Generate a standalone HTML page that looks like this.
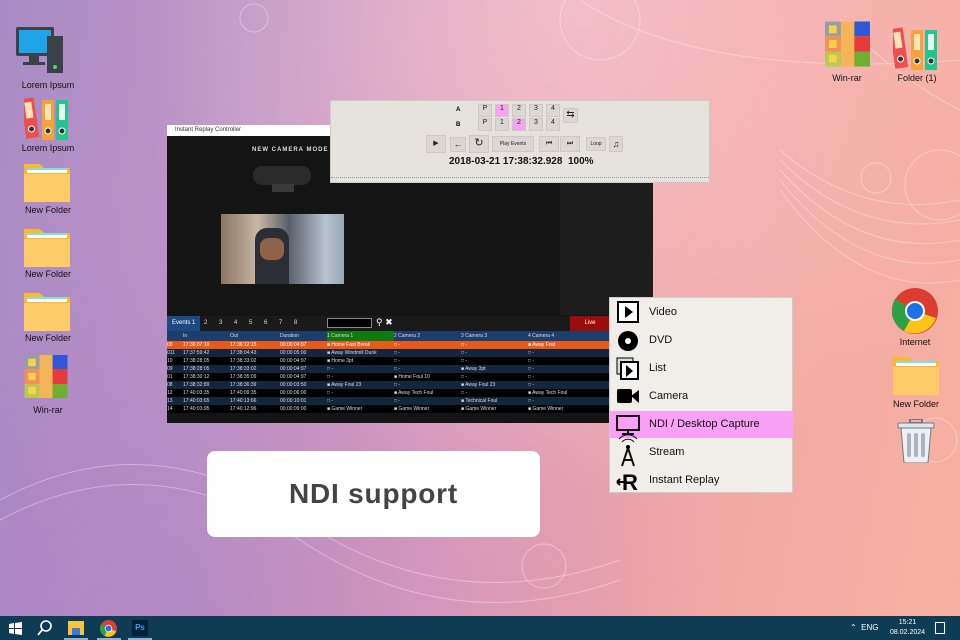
<!DOCTYPE html><html><head><meta charset="utf-8"><style>
*{margin:0;padding:0;box-sizing:border-box}
body{width:960px;height:640px;overflow:hidden;position:relative;font-family:"Liberation Sans",sans-serif;
background:linear-gradient(100deg,#a98ac4 0%,#c096c8 25%,#e3a0bb 50%,#f1a7a6 72%,#f7b1a0 100%)}
.bgtop{position:absolute;left:0;top:0;width:960px;height:640px;background:radial-gradient(ellipse at 60% 0%,rgba(255,215,215,.55),rgba(255,255,255,0) 55%),radial-gradient(ellipse at 20% 100%,rgba(150,110,190,.35),rgba(0,0,0,0) 50%)}
.a{position:absolute}
.lbl{position:absolute;font-size:9px;color:#111;text-align:center;width:80px}
.win{left:167px;top:125px;width:486px;height:298px;background:#141414}
.tb{left:167px;top:125px;width:163px;height:11px;background:#fff;font-size:6px;color:#333;padding:2px 0 0 8px}
.panel{left:330px;top:100px;width:380px;height:83px;background:#e6e2de;border:1px solid #cfcac5}
.btn{position:absolute;background:#dcd7d2;border:1px solid #cdc8c3;font-size:7px;text-align:center;color:#222}
.pk{background:#f7a3f2}
table{border-collapse:collapse;font-size:5px;color:#ddd}
.menu{left:609px;top:297px;width:184px;height:196px;background:#f1ede9;border:1px solid #ccc}
.mi{position:absolute;left:0;width:183px;height:27px;font-size:11px;color:#111;padding:7px 0 0 39px}
.ndi{left:207px;top:451px;width:333px;height:86px;background:#fff;border-radius:8px;font-size:28px;font-weight:bold;color:#444;text-align:center;line-height:86px;letter-spacing:.8px}
.task{left:0;top:616px;width:960px;height:24px;background:#0e3c55}
</style></head><body>
<div class="bgtop"></div>
<svg class="a" style="left:0;top:0" width="960" height="616">
<g fill="none" stroke="rgba(255,255,255,.35)" stroke-width="1">
<path d="M580 0 Q700 80 960 60"/><path d="M840 20 Q900 80 960 110"/><path d="M0 500 Q150 420 300 520 T620 560"/><path d="M0 520 Q150 440 300 540 T620 580"/><path d="M780 150 Q860 220 960 200"/>
<path d="M780 160 Q860 240 960 220"/><path d="M780 170 Q860 260 960 240"/><path d="M780 180 Q860 280 960 260"/><path d="M780 190 Q860 300 960 280"/>
<circle cx="876" cy="178" r="15"/><circle cx="940" cy="185" r="35"/><circle cx="544" cy="566" r="22"/><circle cx="254" cy="18" r="14"/><circle cx="935" cy="440" r="22"/><circle cx="600" cy="20" r="40"/>
</g></svg>

<svg width="0" height="0" style="position:absolute"><defs>
<symbol id="fold" viewBox="0 0 46 42"><path d="M0 4h16l4 4h26v34H0z" fill="#fbb829"/><rect x="3" y="8" width="40" height="5" fill="#fff"/><rect x="3" y="8" width="40" height="2" fill="#7fe0e6"/><path d="M0 14h46v28H0z" fill="#fdcb68"/></symbol>
<symbol id="bind" viewBox="0 0 46 44"><g transform="rotate(-8 8 40)"><rect x="2" y="2" width="13" height="40" fill="#ef4e4e"/><rect x="5" y="6" width="7" height="16" fill="#fde3b8"/><circle cx="8.5" cy="33" r="3" fill="#333" stroke="#fff"/></g><rect x="18" y="4" width="12" height="40" fill="#f7a236"/><rect x="21" y="8" width="6" height="16" fill="#fde3b8"/><circle cx="24" cy="35" r="3" fill="#333" stroke="#fff"/><rect x="32" y="4" width="12" height="40" fill="#22c58b"/><rect x="35" y="8" width="6" height="16" fill="#e6f8ee"/><circle cx="38" cy="35" r="3" fill="#333" stroke="#fff"/></symbol>
<symbol id="rar" viewBox="0 0 46 46"><rect width="46" height="15" fill="#2f57d6"/><rect y="15" width="46" height="16" fill="#e43b3b"/><rect y="31" width="46" height="15" fill="#6daf31"/><rect width="16" height="46" fill="rgba(255,230,120,.5)"/><rect x="16" width="14" height="46" fill="#f5b45a"/><rect x="4" y="4" width="8" height="8" fill="#f7d24a"/><rect x="4" y="19" width="8" height="8" fill="#f7d24a"/><rect x="4" y="34" width="8" height="8" fill="#f7d24a"/></symbol>
</defs></svg>
<svg class="a" style="left:16px;top:27px" width="47" height="47"><rect x="0" y="0" width="38" height="29" rx="2" fill="#3a4148"/><rect x="3" y="3" width="32" height="23" fill="#1ea5e8"/><rect x="13" y="29" width="10" height="6" fill="#3a4148"/><rect x="7" y="35" width="22" height="3" fill="#3a4148"/><rect x="31" y="9" width="16" height="37" fill="#3a4148"/><circle cx="39" cy="40" r="2" fill="#4cd964"/></svg>
<div class="lbl" style="left:8px;top:80px">Lorem Ipsum</div>
<svg class="a" style="left:24px;top:96px" width="46" height="44"><use href="#bind"/></svg>
<div class="lbl" style="left:8px;top:143px">Lorem Ipsum</div>
<svg class="a" style="left:24px;top:160px" width="46" height="42"><use href="#fold"/></svg>
<div class="lbl" style="left:8px;top:205px">New Folder</div>
<svg class="a" style="left:24px;top:225px" width="46" height="42"><use href="#fold"/></svg>
<div class="lbl" style="left:8px;top:269px">New Folder</div>
<svg class="a" style="left:24px;top:289px" width="46" height="42"><use href="#fold"/></svg>
<div class="lbl" style="left:8px;top:333px">New Folder</div>
<svg class="a" style="left:24px;top:355px" width="44" height="43"><use href="#rar"/></svg>
<div class="lbl" style="left:8px;top:405px">Win-rar</div>
<svg class="a" style="left:825px;top:21px" width="45" height="46"><use href="#rar"/></svg>
<div class="lbl" style="left:807px;top:73px">Win-rar</div>
<svg class="a" style="left:893px;top:26px" width="46" height="44"><use href="#bind"/></svg>
<div class="lbl" style="left:877px;top:73px">Folder (1)</div>
<svg class="a" style="left:892px;top:288px" width="46" height="46" viewBox="0 0 46 46"><circle cx="23" cy="23" r="23" fill="#db3e31"/><path d="M23 23L3 11A23 23 0 0 0 12 43z" fill="#2ea043"/><path d="M23 23L12 43A23 23 0 0 0 44 30z" fill="#fcc419"/><circle cx="23" cy="23" r="10" fill="#fff"/><circle cx="23" cy="23" r="8" fill="#1a73e8"/></svg>
<div class="lbl" style="left:875px;top:337px">Internet</div>
<svg class="a" style="left:893px;top:353px" width="46" height="42"><use href="#fold"/></svg>
<div class="lbl" style="left:876px;top:399px">New Folder</div>
<svg class="a" style="left:897px;top:419px" width="38" height="44" viewBox="0 0 38 44"><rect x="13" y="0" width="12" height="4" fill="none" stroke="#6e7a86" stroke-width="2"/><rect x="1" y="4" width="36" height="5" rx="1" fill="#dfe4ea" stroke="#6e7a86"/><path d="M4 9h30l-3 35H7z" fill="#eef1f4" stroke="#6e7a86"/><rect x="10" y="14" width="4" height="24" rx="2" fill="#aab4bf"/><rect x="17" y="14" width="4" height="24" rx="2" fill="#aab4bf"/><rect x="24" y="14" width="4" height="24" rx="2" fill="#aab4bf"/></svg>

<div class="a win"></div>
<div class="a tb">Instant Replay Controller</div>
<div class="a" style="left:252px;top:147px;font-size:6px;color:#ddd;font-weight:bold;letter-spacing:1px">NEW CAMERA MODE</div>
<div class="a" style="left:253px;top:166px;width:58px;height:19px;border-radius:9px;background:#2a2a2a"></div>
<div class="a" style="left:272px;top:184px;width:22px;height:8px;background:#3a3a3a"></div>
<div class="a" style="left:221px;top:214px;width:123px;height:70px;background:linear-gradient(90deg,#8a7560,#c9b7a4 30%,#5a5e6a 55%,#b7c3cf 85%,#9aa6b4)"></div>
<div class="a" style="left:255px;top:228px;width:34px;height:56px;background:#2b2e35;border-radius:12px 12px 0 0"></div>
<div class="a" style="left:260px;top:238px;width:24px;height:22px;background:#8d6248;border-radius:8px"></div>
<div class="a" style="left:560px;top:183px;width:93px;height:132px;background:#1d1d1d"></div>
<div class="a" style="left:167px;top:316px;width:486px;height:15px;background:#1a1a1a"></div>
<div class="a" style="left:167px;top:316px;width:33px;height:15px;background:#1d4a85;font-size:6px;color:#fff;padding:4px 0 0 5px">Events 1</div>
<div class="a" style="left:204px;top:320px;font-size:6px;color:#ddd;word-spacing:10px">2 3 4 5 6 7 8</div>
<div class="a" style="left:327px;top:318px;width:45px;height:10px;background:#000;border:1px solid #888"></div>
<div class="a" style="left:376px;top:317px;font-size:9px;color:#fff">⚲ ✖</div>
<div class="a" style="left:570px;top:316px;width:40px;height:15px;background:#9b0c0c;font-size:6px;color:#fff;text-align:center;padding-top:4px">Live</div>
<table class="a" style="left:167px;top:331px;width:443px">
<tr style="background:#1b3e6e;height:10px"><td style="width:16px"></td><td style="width:47px">In</td><td style="width:50px">Out</td><td style="width:47px">Duration</td><td style="width:67px;background:#0e7a0e">1 Camera 1</td><td style="width:67px">2 Camera 2</td><td style="width:67px">3 Camera 3</td><td>4 Camera 4</td></tr>
<tr style="background:#e8591a;height:8px;color:#fff"><td>00</td><td>17:36:07:10</td><td>17:36:12:15</td><td>00:00:04:97</td><td>■ Home Fast Break</td><td>□ -</td><td>□ -</td><td>■ Away Foul</td></tr>
<tr style="background:#132640;height:8px"><td>011</td><td>17:37:59:42</td><td>17:38:04:43</td><td>00:00:05:00</td><td>■ Away Windmill Dunk</td><td>□ -</td><td>□ -</td><td>□ -</td></tr>
<tr style="background:#000;height:8px"><td>10</td><td>17:38:28:05</td><td>17:38:33:02</td><td>00:00:04:97</td><td>■ Home 3pt</td><td>□ -</td><td>□ -</td><td>□ -</td></tr>
<tr style="background:#132640;height:8px"><td>09</td><td>17:38:28:05</td><td>17:38:33:02</td><td>00:00:04:97</td><td>□ -</td><td>□ -</td><td>■ Away 3pt</td><td>□ -</td></tr>
<tr style="background:#000;height:8px"><td>01</td><td>17:38:30:12</td><td>17:38:35:09</td><td>00:00:04:97</td><td>□ -</td><td>■ Home Foul 10</td><td>□ -</td><td>□ -</td></tr>
<tr style="background:#132640;height:8px"><td>08</td><td>17:38:32:89</td><td>17:38:36:39</td><td>00:00:03:50</td><td>■ Away Foul 23</td><td>□ -</td><td>■ Away Foul 23</td><td>□ -</td></tr>
<tr style="background:#000;height:8px"><td>12</td><td>17:40:03:35</td><td>17:40:09:35</td><td>00:00:06:00</td><td>□ -</td><td>■ Away Tech Foul</td><td>□ -</td><td>■ Away Tech Foul</td></tr>
<tr style="background:#132640;height:8px"><td>13</td><td>17:40:03:65</td><td>17:40:13:66</td><td>00:00:10:01</td><td>□ -</td><td>□ -</td><td>■ Technical Foul</td><td>□ -</td></tr>
<tr style="background:#000;height:8px"><td>14</td><td>17:40:03:95</td><td>17:40:12:96</td><td>00:00:09:00</td><td>■ Game Winner</td><td>■ Game Winner</td><td>■ Game Winner</td><td>■ Game Winner</td></tr>
</table>

<div class="a panel">
<div class="a" style="left:125px;top:6px;font-size:6px;font-weight:bold">A</div>
<div class="a" style="left:125px;top:21px;font-size:6px;font-weight:bold">B</div>
<div class="btn" style="left:147px;top:3px;width:14px;height:13px">P</div><div class="btn pk" style="left:164px;top:3px;width:14px;height:13px">1</div><div class="btn" style="left:181px;top:3px;width:14px;height:13px">2</div><div class="btn" style="left:198px;top:3px;width:14px;height:13px">3</div><div class="btn" style="left:215px;top:3px;width:14px;height:13px">4</div>
<div class="btn" style="left:147px;top:17px;width:14px;height:13px">P</div><div class="btn" style="left:164px;top:17px;width:14px;height:13px">1</div><div class="btn pk" style="left:181px;top:17px;width:14px;height:13px">2</div><div class="btn" style="left:198px;top:17px;width:14px;height:13px">3</div><div class="btn" style="left:215px;top:17px;width:14px;height:13px">4</div>
<div class="btn" style="left:232px;top:7px;width:15px;height:15px;font-size:10px;line-height:12px">⇆</div>
<div class="btn" style="left:95px;top:34px;width:20px;height:18px;line-height:16px">▶</div>
<div class="btn" style="left:119px;top:36px;width:16px;height:15px;line-height:13px;font-size:9px">←</div>
<div class="btn" style="left:138px;top:34px;width:20px;height:18px;line-height:15px;font-size:11px">↻</div>
<div class="btn" style="left:161px;top:35px;width:42px;height:16px;line-height:14px;font-size:5px">Play Events</div>
<div class="btn" style="left:208px;top:35px;width:20px;height:16px;line-height:14px;font-size:7px">⏮</div>
<div class="btn" style="left:229px;top:35px;width:20px;height:16px;line-height:14px;font-size:7px">⏭</div>
<div class="btn" style="left:255px;top:36px;width:20px;height:14px;line-height:12px;font-size:5px">Loop</div>
<div class="btn" style="left:278px;top:35px;width:14px;height:16px;line-height:14px;font-size:9px">♫</div>
<div class="a" style="left:118px;top:55px;font-size:10px;font-weight:bold;color:#111">2018-03-21 17:38:32.928 &nbsp;100%</div>
<div class="a" style="left:0;top:76px;width:378px;border-top:1px dotted #999"></div>
</div>

<div class="a menu">
<div class="mi" style="top:1px">Video</div>
<div class="mi" style="top:29px">DVD</div>
<div class="mi" style="top:57px">List</div>
<div class="mi" style="top:85px">Camera</div>
<div class="mi" style="top:113px;background:#fba0f7">NDI / Desktop Capture</div>
<div class="mi" style="top:141px">Stream</div>
<div class="mi" style="top:169px">Instant Replay</div>
<svg class="a" style="left:6px;top:0" width="28" height="196">
<rect x="2" y="4" width="20" height="20" fill="#fff" stroke="#000" stroke-width="2"/><path d="M9 8l8 6-8 6z"/>
<circle cx="12" cy="43" r="10"/><circle cx="12" cy="43" r="3" fill="#fff"/>
<rect x="1" y="60" width="16" height="16" fill="#ddd" stroke="#000"/><rect x="5" y="64" width="17" height="17" fill="#fff" stroke="#000" stroke-width="2"/><path d="M10 67l7 6-7 6z"/>
<rect x="1" y="91" width="15" height="14" rx="2"/><path d="M15 98l8-6v13z"/>
<rect x="1" y="118" width="22" height="14" fill="none" stroke="#111" stroke-width="2"/><path d="M12 132v3M6 136h12" stroke="#111" stroke-width="2"/>
<path d="M12 150l-6 18M12 150l6 18M8 162h8" stroke="#111" stroke-width="2" fill="none"/><circle cx="12" cy="149" r="2"/><path d="M6 144a8 8 0 0 1 12 0M3 141a12 12 0 0 1 18 0" stroke="#111" fill="none"/>
<text x="6" y="192" font-size="22" font-weight="bold" font-family="Liberation Sans">R</text><path d="M1 184h8M1 184l3-3M1 184l3 3" stroke="#000" stroke-width="2"/>
</svg>
</div>

<div class="a ndi">NDI support</div>

<div class="a task">
<svg class="a" style="left:9px;top:6px" width="13" height="13"><path d="M0 2l5-1v5H0zM6 1l7-1v6H6zM0 7h5v5l-5-1zM6 7h7v6l-7-1z" fill="#fff"/></svg>
<svg class="a" style="left:37px;top:4px" width="16" height="16"><circle cx="9" cy="6" r="5" fill="none" stroke="#fff" stroke-width="1.6"/><path d="M5 10l-4 5" stroke="#fff" stroke-width="1.8"/></svg>
<svg class="a" style="left:68px;top:5px" width="16" height="14"><rect width="16" height="14" fill="#f7c343"/><rect x="4" y="7" width="8" height="7" fill="#3a7bd5"/></svg>
<svg class="a" style="left:100px;top:4px" width="17" height="17" viewBox="0 0 46 46"><circle cx="23" cy="23" r="23" fill="#db3e31"/><path d="M23 23L3 11A23 23 0 0 0 12 43z" fill="#2ea043"/><path d="M23 23L12 43A23 23 0 0 0 44 30z" fill="#fcc419"/><circle cx="23" cy="23" r="10" fill="#fff"/><circle cx="23" cy="23" r="8" fill="#1a73e8"/></svg>
<div class="a" style="left:132px;top:4px;width:16px;height:16px;background:#001e36;color:#31a8ff;font-size:8px;font-weight:bold;text-align:center;line-height:16px">Ps</div>
<div class="a" style="left:64px;top:22px;width:24px;height:2px;background:#8ab4d8"></div>
<div class="a" style="left:97px;top:22px;width:24px;height:2px;background:#8ab4d8"></div>
<div class="a" style="left:128px;top:22px;width:24px;height:2px;background:#8ab4d8"></div>
<div class="a" style="left:850px;top:7px;font-size:8px;color:#fff">⌃ &nbsp;ENG</div>
<div class="a" style="left:890px;top:2px;font-size:7px;color:#fff;text-align:center;line-height:10px">15:21<br>08.02.2024</div>
<div class="a" style="left:935px;top:6px;width:10px;height:12px;border:1px solid #fff"></div>
</div>
</body></html>
